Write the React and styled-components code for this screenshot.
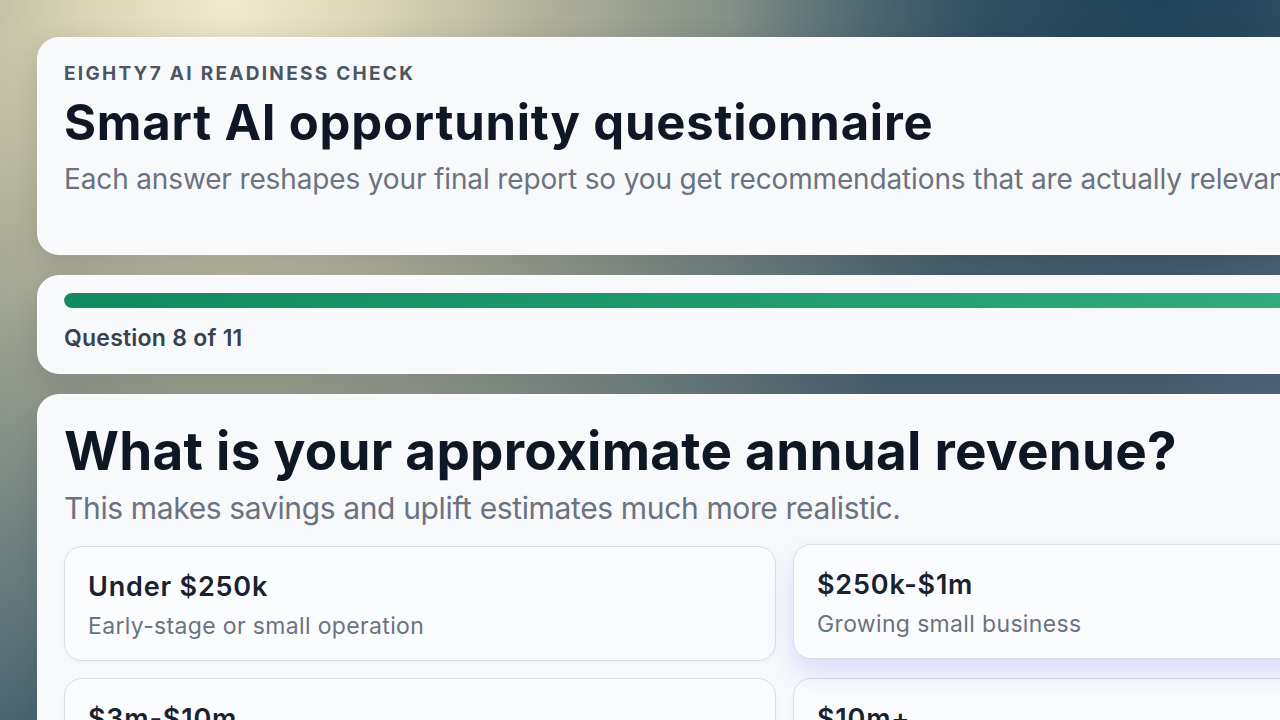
import React from "react";
import styled, {createGlobalStyle} from "styled-components";

const GlobalStyle = createGlobalStyle`
    html, body {
        margin: 0;
        padding: 0;
        overflow: hidden;
    }
    body {
        font-family: Inter, "Noto Sans", sans-serif;
        background: #4a6470;
    }
`;

const options = [
    {title: "Under $250k", desc: "Early-stage or small operation"},
    {title: "$250k-$1m", desc: "Growing small business", hovered: true},
    {title: "$3m-$10m", desc: "Established mid-sized company"},
    {title: "$10m+", desc: "Larger organisation"},
];

function App() {
    const current = 8;
    const total = 11;

    return (
        <>
            <GlobalStyle/>
            <Backdrop>
                <Page>
                    <Card $padBottom={55}>
                        <Eyebrow>Eighty7 AI readiness check</Eyebrow>
                        <Title>Smart AI opportunity questionnaire</Title>
                        <Lead>Each answer reshapes your final report so you get recommendations that are actually relevant to your business.</Lead>
                    </Card>

                    <Card $padTop={17} $padBottom={19}>
                        <Track>
                            <Fill style={{width: `${(current / total) * 100 + 18}%`}}/>
                        </Track>
                        <StepLabel>Question {current} of {total}</StepLabel>
                    </Card>

                    <Card $padTop={26} $padBottom={40}>
                        <Question>What is your approximate annual revenue?</Question>
                        <Lead $second>This makes savings and uplift estimates much more realistic.</Lead>
                        <Choices>
                            {options.map((option) => (
                                <Choice key={option.title} $hovered={option.hovered}>
                                    <ChoiceTitle>{option.title}</ChoiceTitle>
                                    <ChoiceDesc>{option.desc}</ChoiceDesc>
                                </Choice>
                            ))}
                        </Choices>
                    </Card>
                </Page>
            </Backdrop>
        </>
    );
}

const Backdrop = styled.div`
    width: 100vw;
    height: 100vh;
    overflow: hidden;
    background:
        radial-gradient(ellipse 430px 300px at 1160px 0px, rgba(28, 62, 84, 0.92) 0%, rgba(28, 62, 84, 0) 100%),
        radial-gradient(circle at 230px 0px,
            #f2ebcf 0px,
            #d9d4b6 150px,
            #b4b39c 300px,
            #8f988b 450px,
            #6d7f80 600px,
            #4a6470 760px,
            #4b6375 1000px,
            #5a7186 1200px);
`;

const Page = styled.div`
    width: 1569px;
    box-sizing: border-box;
    padding: 37px;
    display: flex;
    flex-direction: column;
    gap: 20px;
`;

const Card = styled.section`
    width: 1495px;
    box-sizing: border-box;
    padding: ${({$padTop}) => $padTop ?? 24}px 26px ${({$padBottom}) => $padBottom ?? 26}px;
    background: #f8f9fb;
    border: 1px solid rgba(255, 255, 255, 0.7);
    border-radius: 22px;
    box-shadow: 0 10px 30px rgba(15, 30, 45, 0.18);
`;

const Eyebrow = styled.div`
    font-size: 19px;
    line-height: 1.25;
    font-weight: 700;
    letter-spacing: 0.12em;
    text-transform: uppercase;
    color: #4b5563;
`;

const Title = styled.h1`
    margin: 9px 0 0;
    font-size: 49px;
    line-height: 1.15;
    font-weight: 700;
    letter-spacing: 0.016em;
    color: #0f1724;
`;

const Lead = styled.p`
    margin: ${({$second}) => ($second ? "6px" : "10px")} 0 0;
    font-size: ${({$second}) => ($second ? 30 : 28)}px;
    line-height: 1.35;
    font-weight: 400;
    letter-spacing: ${({$second}) => ($second ? "-0.012em" : "-0.005em")};
    color: #6b7280;
    white-space: nowrap;
`;

const Track = styled.div`
    height: 15px;
    border-radius: 999px;
    background: #e4e8ec;
    overflow: hidden;
`;

const Fill = styled.div`
    height: 100%;
    border-radius: 999px;
    background: linear-gradient(90deg, #128a5f 0%, #1f9a6d 50%, #36ad80 100%);
`;

const StepLabel = styled.div`
    margin-top: 16px;
    font-size: 23px;
    line-height: 1.3;
    font-weight: 600;
    letter-spacing: 0.01em;
    color: #374151;
`;

const Question = styled.h2`
    margin: 0;
    font-size: 53px;
    line-height: 1.15;
    font-weight: 700;
    letter-spacing: 0.005em;
    color: #0f1724;
`;

const Choices = styled.div`
    margin-top: 18px;
    display: grid;
    grid-template-columns: 1fr 1fr;
    gap: 17px;
`;

const Choice = styled.button`
    all: unset;
    box-sizing: border-box;
    display: flex;
    flex-direction: column;
    gap: 7px;
    min-height: 113px;
    padding: 23px 23px 18px;
    border-radius: 18px;
    border: 1px solid #d9dee5;
    background: #fbfcfe;
    cursor: pointer;
    transform: ${({$hovered}) => ($hovered ? "translateY(-2px)" : "none")};
    box-shadow: ${({$hovered}) =>
        $hovered ? "0 14px 30px rgba(99, 102, 241, 0.2)" : "0 2px 6px rgba(15, 23, 42, 0.03)"};
`;

const ChoiceTitle = styled.span`
    font-size: 27px;
    line-height: 1.25;
    font-weight: 600;
    letter-spacing: 0.03em;
    color: #1a2230;
`;

const ChoiceDesc = styled.span`
    font-size: 23px;
    line-height: 1.35;
    font-weight: 400;
    letter-spacing: 0.015em;
    color: #6b7280;
`;

export default App;
